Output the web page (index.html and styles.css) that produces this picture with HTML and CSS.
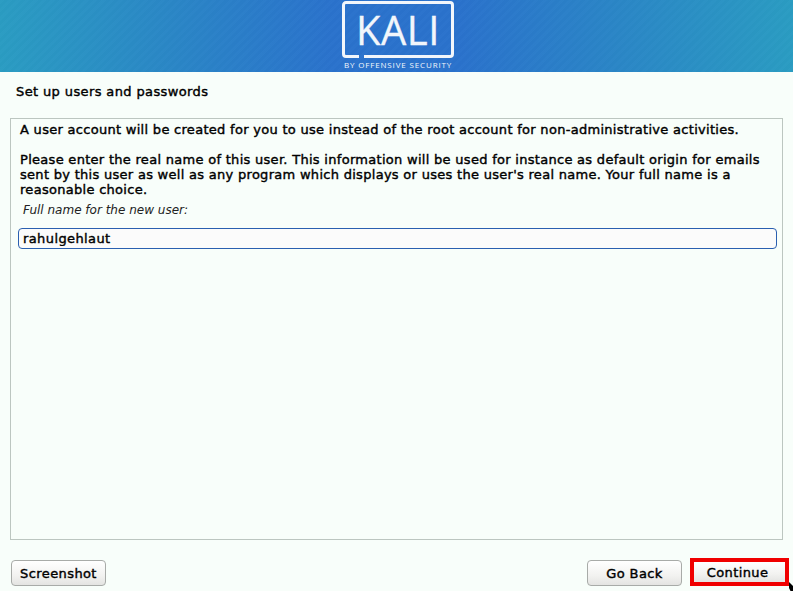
FILE: index.html
```html
<!DOCTYPE html>
<html lang="en">
<head>
<meta charset="utf-8">
<title>Set up users and passwords</title>
<link rel="stylesheet" href="styles.css">
</head>
<body>
<div class="app">
  <header class="banner">
    <div class="logo">
      <svg class="logo-frame" width="112" height="60" viewBox="0 0 112 60" aria-hidden="true">
        <path d="M17 55.500H4a2.500 2.500 0 0 1-2.500-2.500V4A2.500 2.500 0 0 1 4 1.500H108a2.500 2.500 0 0 1 2.500 2.500V53a2.500 2.500 0 0 1-2.500 2.500H22" fill="none" stroke="#f2f6fb" stroke-width="3"/>
      </svg>
      <span class="logo-word">KALI</span>
      <span class="logo-sub">BY OFFENSIVE SECURITY</span>
    </div>
  </header>
  <main class="content">
    <h1 class="title">Set up users and passwords</h1>
    <section class="panel">
      <p class="para">A user account will be created for you to use instead of the root account for non-administrative activities.</p>
      <p class="para">Please enter the real name of this user. This information will be used for instance as default origin for emails sent by this user as well as any program which displays or uses the user's real name. Your full name is a reasonable choice.</p>
      <label class="field-label" for="fullname">Full name for the new user:</label>
      <input class="field" id="fullname" type="text" value="rahulgehlaut">
    </section>
    <footer class="actions">
      <button class="btn btn-shot">Screenshot</button>
      <div class="actions-right">
        <button class="btn btn-back">Go Back</button>
        <button class="btn btn-next">Continue</button>
      </div>
    </footer>
  </main>
  <svg class="cursor" width="4" height="9" viewBox="0 0 4 9" aria-hidden="true"><path d="M0 0L4 4V9H1.500L0 6Z" fill="#000"/></svg>
</div>
</body>
</html>
```

FILE: styles.css
```css
* { box-sizing: border-box; }
html, body { margin: 0; padding: 0; height: 100%; overflow: hidden; }
body { background: #f8fefa; font-family: "DejaVu Sans", sans-serif; font-size: 13px; color: #000; }
.app { position: relative; height: 591px; display: flex; flex-direction: column; }
.banner { height: 72px; flex: none; display: flex; justify-content: center; background: repeating-linear-gradient(135deg, rgba(255,255,255,0.012) 0 3px, rgba(0,0,0,0.008) 3px 6px), linear-gradient(90deg, #2a9cc2 0%, #2a86c6 22%, #2a72cc 42%, #2a72cc 58%, #2a86c6 78%, #2a9cc2 100%); }
.logo { position: relative; width: 112px; height: 72px; margin-left: 3px; color: #f2f6fb; }
.logo-frame { position: absolute; left: 0; top: 1px; }
.logo-word { position: absolute; left: 0; right: 0; top: 5px; text-align: center; font-family: "Open Sans", sans-serif; font-size: 40px; font-weight: 400; line-height: 50px; letter-spacing: 0.500px; -webkit-text-stroke: 0.300px #f2f6fb; }
.logo-sub { position: absolute; left: 0; right: 0; top: 59px; text-align: center; font-family: "Open Sans", sans-serif; font-size: 8px; font-weight: 400; line-height: 11px; letter-spacing: 0.850px; white-space: nowrap; }
.content { flex: 1; display: flex; flex-direction: column; padding: 0 4px 5px 10px; min-height: 0; }
.title { margin: 12px 0 0 6px; height: 34px; font-size: 13px; line-height: 15px; font-weight: normal; letter-spacing: 0.380px; -webkit-text-stroke: 0.400px #000; }
.panel { flex: 1; margin-right: 6px; border: 1px solid #bcc6c0; padding: 3px 3px 0 9px; min-height: 0; }
.para { margin: 0 0 15px; line-height: 15px; letter-spacing: 0.290px; -webkit-text-stroke: 0.400px #000; }
.para:nth-of-type(2) { margin-bottom: 0; width: 745px; }
.field-label { display: block; margin: 6px 0 0 3px; font-size: 12px; line-height: 15px; font-style: italic; color: #222; }
.field { display: block; margin: 10px 0 0 -2px; width: 759px; height: 21px; border: 1.500px solid #2a5fb0; border-radius: 4px; background: #fbfbfb; padding: 0 3px 0 4px; font: inherit; letter-spacing: 0.400px; color: #000; outline: none; -webkit-text-stroke: 0.400px #000; }
.actions { flex: none; height: 46px; display: flex; justify-content: space-between; align-items: flex-end; }
.actions-right { display: flex; align-items: flex-end; gap: 8px; }
.btn { height: 26px; padding: 0; font: inherit; letter-spacing: 0.400px; color: #000; background: linear-gradient(#ffffff, #f2f2f0 60%, #e4e4e2); border: 1px solid #a8aba8; border-radius: 4px; -webkit-text-stroke: 0.400px #000; }
.btn-shot { width: 95px; margin-left: 1px; }
.btn-back { width: 95px; }
.btn-next { width: 99px; height: 28px; border: 4px solid #f00000; border-radius: 0; padding-right: 4px; }
.cursor { position: absolute; right: 0; bottom: 0; }
```
